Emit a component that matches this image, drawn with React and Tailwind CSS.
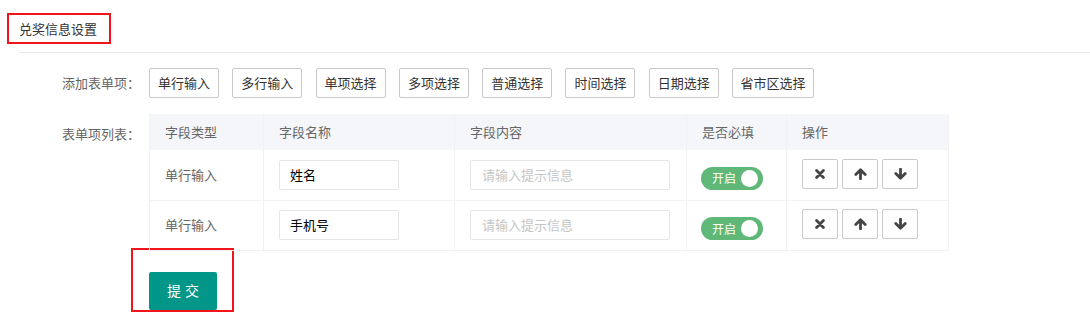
import React from 'react'

const addButtons = ['单行输入', '多行输入', '单项选择', '多项选择', '普通选择', '时间选择', '日期选择', '省市区选择']

const fields = [
  { type: '单行输入', name: '姓名' },
  { type: '单行输入', name: '手机号' },
]

function Toggle(){
  return (
    <div className="mt-[7px] w-[62px] h-[23px] rounded-full bg-[#5fb878] flex items-center justify-between pl-[11px] pr-[5px]">
      <span className="text-white text-[12px] leading-none">开启</span>
      <span className="w-[17px] h-[17px] rounded-full bg-white" />
    </div>
  )
}

function IconBtn({ children }){
  return (
    <button className="w-[36px] h-[30px] border border-[#c9c9c9] rounded-[2px] bg-white flex items-center justify-center text-[#444]">
      {children}
    </button>
  )
}

const XIcon = () => (
  <svg width="10" height="10" viewBox="0 0 10 10" fill="none" stroke="currentColor" strokeWidth="2.8" strokeLinecap="round">
    <path d="M1.6 1.6 8.4 8.4M8.4 1.6 1.6 8.4" />
  </svg>
)

const ArrowIcon = ({ down }) => (
  <svg width="13" height="12" viewBox="0 0 13 12" fill="none" stroke="currentColor" strokeWidth="2.8" strokeLinecap="round" strokeLinejoin="round" className={down ? 'rotate-180' : ''}>
    <path d="M6.5 10.8V2.2M1.8 6.4 6.5 1.7 11.2 6.4" />
  </svg>
)

export default function App(){
  return (
    <div className="w-[1090px] h-[327px] bg-white overflow-hidden text-[13px] text-[#666] font-['Noto_Sans_CJK_SC','Noto_Sans',sans-serif]">
      <div className="pt-[13px] pl-[7px]">
        <div className="w-[104px] h-[31px] border-2 border-[#f2141b] flex items-center pl-[10px] text-[#333]">兑奖信息设置</div>
      </div>
      <div className="ml-[19px] mt-[8px] h-px bg-[#e6e6e6]" />

      <div className="pl-[62px] mt-[15px]">
        <div className="flex items-center">
          <div className="w-[87px]">添加表单项：</div>
          <div className="flex gap-[13.3px]">
            {addButtons.map(b => (
              <button key={b} className={(b.length > 4 ? 'w-[82px]' : 'w-[70px]') + ' h-[30px] border border-[#c9c9c9] rounded-[2px] bg-white text-[#333] text-[13px]'}>{b}</button>
            ))}
          </div>
        </div>

        <div className="flex items-start mt-[16px]">
          <div className="w-[87px] pt-[10px] leading-[20px]">表单项列表：</div>
          <table className="table-fixed border-collapse w-[799px]">
            <colgroup>
              <col className="w-[114px]" />
              <col className="w-[191px]" />
              <col className="w-[232px]" />
              <col className="w-[100px]" />
              <col className="w-[162px]" />
            </colgroup>
            <thead>
              <tr className="h-[36px] bg-[#f5f6fa]">
                {['字段类型', '字段名称', '字段内容', '是否必填', '操作'].map(h => (
                  <th key={h} className="text-left font-normal pl-[15px] border-x border-[#f2f2f2] text-[#666]">{h}</th>
                ))}
              </tr>
            </thead>
            <tbody>
              {fields.map((f, i) => (
                <tr key={i} className="h-[50px] border-b border-[#f2f2f2]">
                  <td className="pl-[15px] border-x border-[#f2f2f2] align-middle">{f.type}</td>
                  <td className="pl-[15px] border-x border-[#f2f2f2] align-middle">
                    <div className="w-[120px] h-[30px] border border-[#e6e6e6] rounded-[2px] flex items-center pl-[10px] text-black">{f.name}</div>
                  </td>
                  <td className="pl-[15px] border-x border-[#f2f2f2] align-middle">
                    <div className="w-[200px] h-[30px] border border-[#e6e6e6] rounded-[2px] flex items-center pl-[11px] text-[#c6c6c6]">请输入提示信息</div>
                  </td>
                  <td className="pl-[14px] border-x border-[#f2f2f2] align-middle">
                    <Toggle />
                  </td>
                  <td className="pl-[15px] border-x border-[#f2f2f2] align-middle">
                    <div className="flex gap-[4px] -mt-[2px]">
                      <IconBtn><XIcon /></IconBtn>
                      <IconBtn><ArrowIcon /></IconBtn>
                      <IconBtn><ArrowIcon down /></IconBtn>
                    </div>
                  </td>
                </tr>
              ))}
            </tbody>
          </table>
        </div>
      </div>

      <div className="ml-[131px] -mt-[3px] w-[103px] h-[64px] border-2 border-[#f2141b] pl-[16px] pt-[22px]">
        <button className="w-[68px] h-[38px] rounded-[2px] bg-[#009688] text-white text-[14px] tracking-[4px] pl-[4px]">提交</button>
      </div>
    </div>
  )
}
